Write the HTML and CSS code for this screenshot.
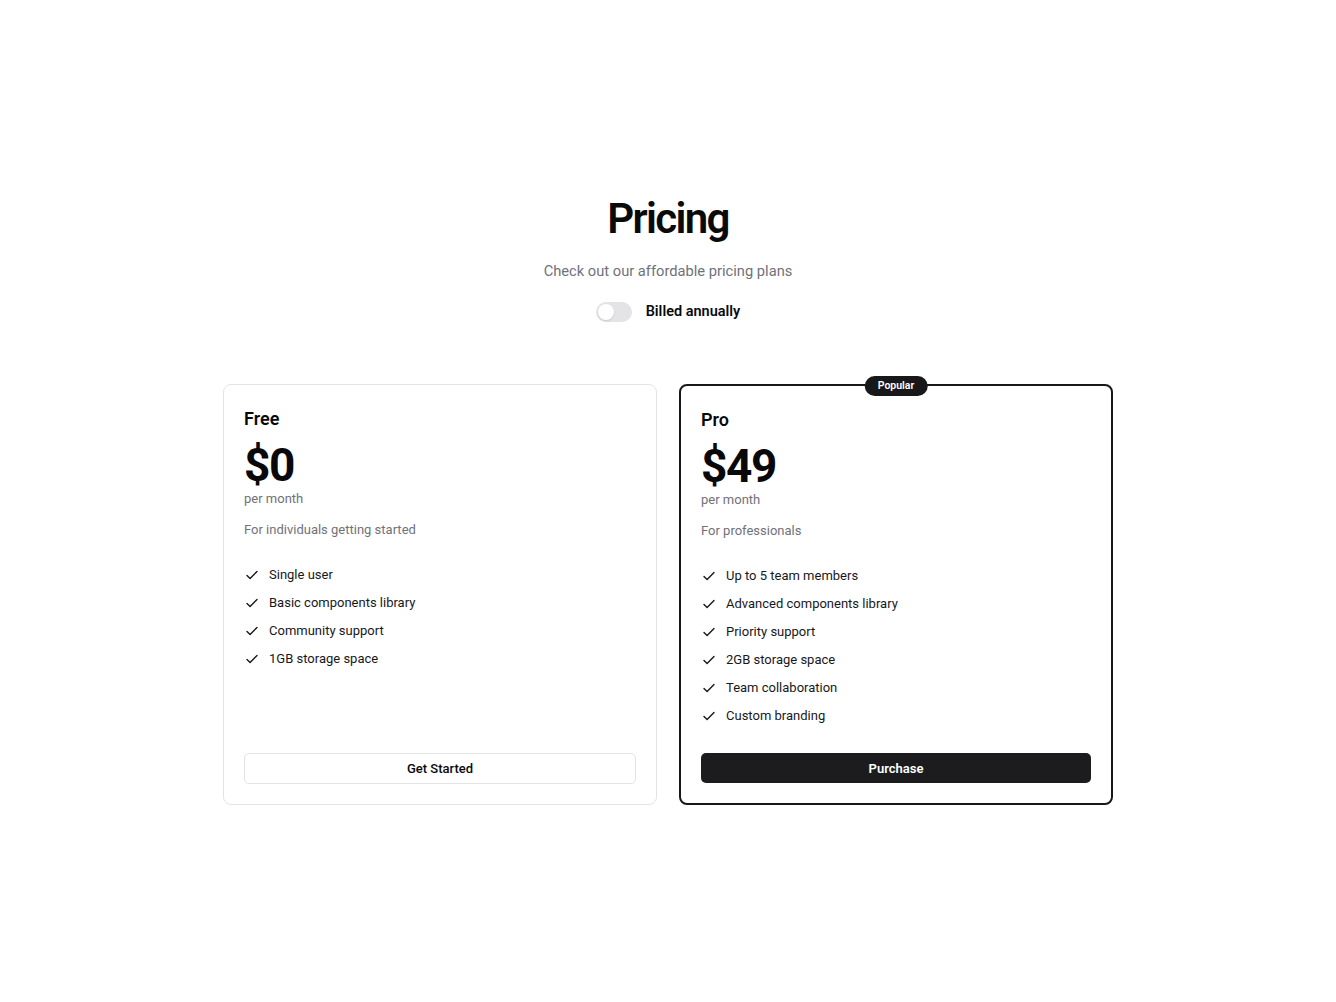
FILE: index.html
```html
<!DOCTYPE html>
<html lang="en">
<head>
<meta charset="utf-8">
<title>Pricing</title>
<link rel="stylesheet" href="styles.css">
</head>
<body>
<main class="page">
  <header class="intro">
    <h1 class="title">Pricing</h1>
    <p class="subtitle">Check out our affordable pricing plans</p>
    <div class="billing">
      <span class="switch"><span class="knob"></span></span>
      <span class="billing-label">Billed annually</span>
    </div>
  </header>

  <section class="plans">
    <article class="plan">
      <h2 class="plan-name">Free</h2>
      <div class="price">$0</div>
      <div class="period">per month</div>
      <p class="desc">For individuals getting started</p>
      <ul class="features">
        <li><svg class="check" viewBox="0 0 16 16"><path d="M3 8.4l3.1 3.1L13 4.6"/></svg>Single user</li>
        <li><svg class="check" viewBox="0 0 16 16"><path d="M3 8.4l3.1 3.1L13 4.6"/></svg>Basic components library</li>
        <li><svg class="check" viewBox="0 0 16 16"><path d="M3 8.4l3.1 3.1L13 4.6"/></svg>Community support</li>
        <li><svg class="check" viewBox="0 0 16 16"><path d="M3 8.4l3.1 3.1L13 4.6"/></svg>1GB storage space</li>
      </ul>
      <button class="btn btn-outline">Get Started</button>
    </article>

    <article class="plan plan-pro">
      <span class="badge">Popular</span>
      <h2 class="plan-name">Pro</h2>
      <div class="price">$49</div>
      <div class="period">per month</div>
      <p class="desc">For professionals</p>
      <ul class="features">
        <li><svg class="check" viewBox="0 0 16 16"><path d="M3 8.4l3.1 3.1L13 4.6"/></svg>Up to 5 team members</li>
        <li><svg class="check" viewBox="0 0 16 16"><path d="M3 8.4l3.1 3.1L13 4.6"/></svg>Advanced components library</li>
        <li><svg class="check" viewBox="0 0 16 16"><path d="M3 8.4l3.1 3.1L13 4.6"/></svg>Priority support</li>
        <li><svg class="check" viewBox="0 0 16 16"><path d="M3 8.4l3.1 3.1L13 4.6"/></svg>2GB storage space</li>
        <li><svg class="check" viewBox="0 0 16 16"><path d="M3 8.4l3.1 3.1L13 4.6"/></svg>Team collaboration</li>
        <li><svg class="check" viewBox="0 0 16 16"><path d="M3 8.4l3.1 3.1L13 4.6"/></svg>Custom branding</li>
      </ul>
      <button class="btn btn-solid">Purchase</button>
    </article>
  </section>
</main>
</body>
</html>
```

FILE: styles.css
```css
* { box-sizing: border-box; }
html, body { margin: 0; padding: 0; background: #fff; }
body {
  font-family: Roboto, Inter, "Liberation Sans", sans-serif;
  color: #09090b;
  -webkit-font-smoothing: antialiased;
}
.page {
  padding-top: 195px;
  display: flex;
  flex-direction: column;
  align-items: center;
}
.intro {
  display: flex;
  flex-direction: column;
  align-items: center;
}
.title {
  margin: 0;
  font-size: 42px;
  line-height: 48px;
  font-weight: 600;
  letter-spacing: -0.04em;
  color: #0a0a0a;
}
.subtitle {
  margin: 17px 0 0;
  font-size: 14.7px;
  line-height: 22px;
  color: #71717a;
}
.billing {
  margin-top: 19px;
  display: flex;
  align-items: center;
  gap: 14px;
}
.switch {
  width: 36px;
  height: 20px;
  border-radius: 999px;
  background: #e4e4e7;
  padding: 2px;
  display: flex;
  align-items: center;
}
.knob {
  width: 16px;
  height: 16px;
  border-radius: 50%;
  background: #fff;
  box-shadow: 0 1px 2px rgba(0,0,0,0.12);
}
.billing-label {
  font-size: 14.5px;
  line-height: 22px;
  font-weight: 600;
  color: #09090b;
}
.plans {
  margin-top: 61px;
  width: 890px;
  display: grid;
  grid-template-columns: 1fr 1fr;
  gap: 22px;
}
.plan {
  position: relative;
  border: 1px solid #e4e4e7;
  border-radius: 8px;
  padding: 20px;
  display: flex;
  flex-direction: column;
  background: #fff;
}
.plan-pro {
  border: 2px solid #18181b;
}
.badge {
  position: absolute;
  top: -10px;
  left: 50%;
  transform: translateX(-50%);
  height: 20px;
  padding: 0 13px;
  border-radius: 999px;
  background: #18181b;
  color: #fff;
  font-size: 10.5px;
  font-weight: 600;
  line-height: 20px;
}
.plan-name {
  margin: 0;
  font-size: 18px;
  line-height: 28px;
  font-weight: 600;
}
.price {
  margin-top: 8px;
  font-size: 46px;
  line-height: 48px;
  font-weight: 700;
  letter-spacing: -0.03em;
}
.period {
  font-size: 13px;
  line-height: 20px;
  color: #71717a;
}
.desc {
  margin: 11px 0 0;
  font-size: 13px;
  line-height: 20px;
  color: #71717a;
}
.features {
  list-style: none;
  margin: 25px 0 27px;
  padding: 0;
  display: flex;
  flex-direction: column;
  gap: 8px;
}
.features li {
  display: flex;
  align-items: center;
  gap: 9px;
  font-size: 13px;
  line-height: 20px;
  color: #18181b;
}
.check {
  width: 16px;
  height: 16px;
  flex: none;
  fill: none;
  stroke: #18181b;
  stroke-width: 1.4;
  stroke-linecap: round;
  stroke-linejoin: round;
}
.btn {
  margin-top: auto;
  height: 31px;
  width: 100%;
  border-radius: 5px;
  font-family: inherit;
  font-size: 13px;
  font-weight: 500;
  cursor: pointer;
}
.btn-outline {
  background: #fff;
  border: 1px solid #e4e4e7;
  color: #09090b;
}
.btn-solid {
  height: 30px;
  background: #1c1c1e;
  border: none;
  color: #fff;
  font-weight: 600;
}
```
